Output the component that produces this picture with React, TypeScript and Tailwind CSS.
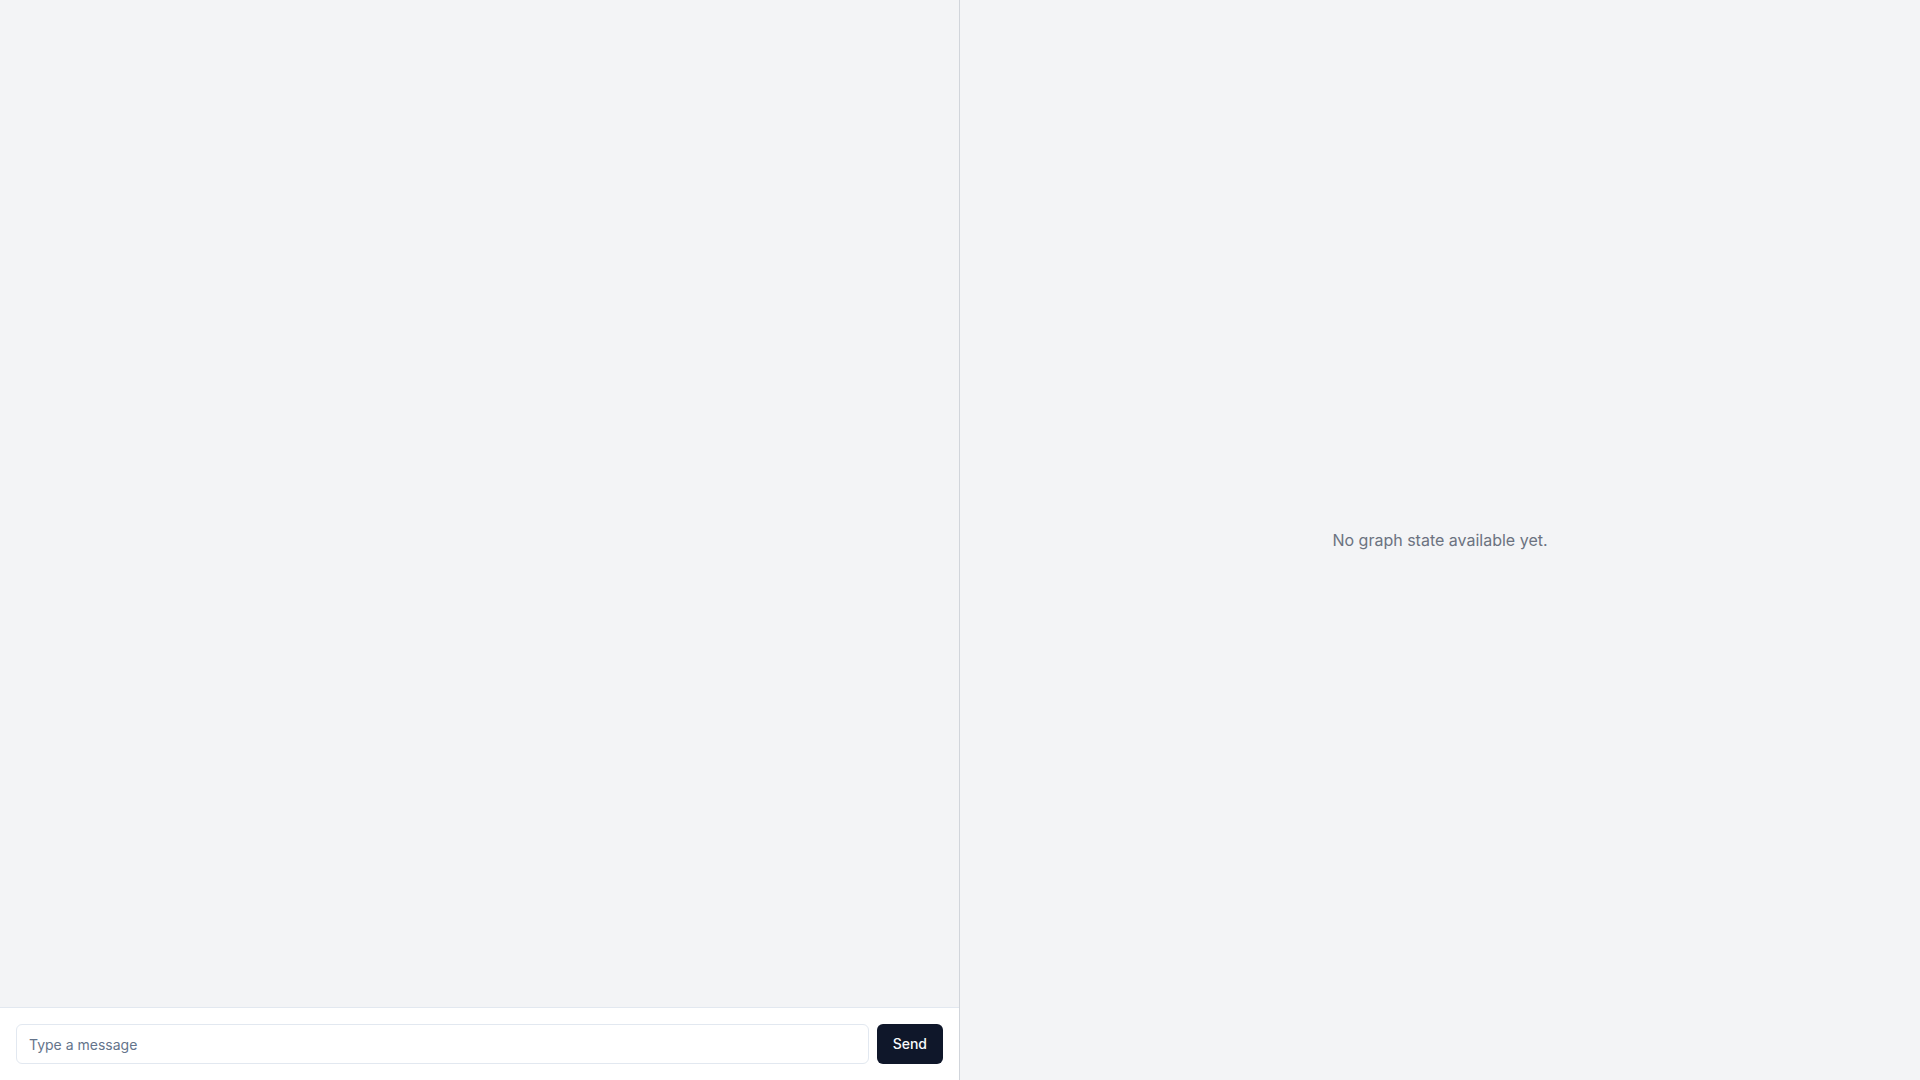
import { useState, type FormEvent } from "react";

const ChatPanel = () => {
	const [message, setMessage] = useState("");

	const handleSubmit = (e: FormEvent) => {
		e.preventDefault();
		setMessage("");
	};

	return (
		<section className="flex w-1/2 flex-col border-r border-[#d1d5db]">
			{/* Messages */}
			<div className="flex-1 overflow-y-auto p-4"></div>

			{/* Composer */}
			<form
				onSubmit={handleSubmit}
				className="flex gap-2 border-t border-[#e2e8f0] bg-white p-4"
			>
				<input
					type="text"
					aria-label="Message"
					value={message}
					onChange={(e) => setMessage(e.target.value)}
					placeholder="Type a message"
					className="h-10 min-w-0 flex-1 rounded-md border border-[#e2e8f0] bg-white px-3 py-2 text-sm text-[#020817] placeholder:text-[#64748b]"
				/>
				<button
					type="submit"
					className="inline-flex h-10 items-center justify-center rounded-md bg-[#0f172a] px-4 py-2 text-sm font-medium text-[#f8fafc] hover:bg-[#0f172a]/90"
				>
					Send
				</button>
			</form>
		</section>
	);
};

const GraphPanel = () => {
	return (
		<section className="flex w-1/2 items-center justify-center p-4">
			<p className="text-base text-[#6b7280]">No graph state available yet.</p>
		</section>
	);
};

const App = () => {
	return (
		<main className="flex h-screen bg-[#f3f4f6] font-['Inter',sans-serif]">
			<ChatPanel />
			<GraphPanel />
		</main>
	);
};

export default App;
